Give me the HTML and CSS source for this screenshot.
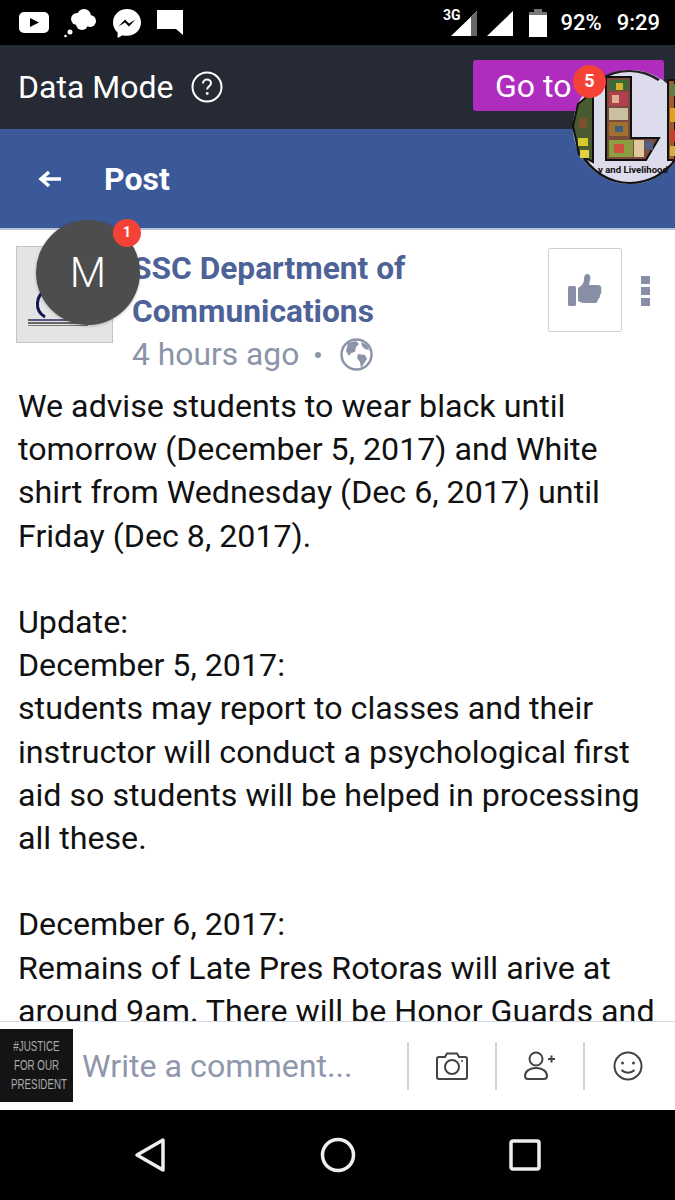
FILE: index.html
```html
<!DOCTYPE html>
<html>
<head>
  <meta charset="UTF-8">
  <title>Post</title>
  <link rel="stylesheet" href="styles.css">
</head>
<body>
  <div class="phone">
    <div class="status">
      <div class="status-left">
        <svg class="s-icon" width="32" height="24" viewBox="0 0 32 24"><rect x="1" y="1" width="30" height="21" rx="5" fill="#fff"/><path d="M12 7l9 4.500-9 4.500z" fill="#000"/></svg>
        <svg class="s-icon" width="34" height="32" viewBox="0 0 34 32"><circle cx="13" cy="12" r="6" fill="#fff"/><circle cx="20" cy="9" r="7" fill="#fff"/><circle cx="26" cy="14" r="6" fill="#fff"/><circle cx="18" cy="17" r="6" fill="#fff"/><circle cx="6" cy="25" r="2.500" fill="#fff"/><circle cx="1.500" cy="29" r="1.300" fill="#fff"/></svg>
        <svg class="s-icon" width="30" height="30" viewBox="0 0 30 30"><path d="M15 1C7 1 1 7 1 14.500c0 4 1.800 7.500 4.600 10V30l5-2.800c1.400.4 2.900.6 4.400.6 8 0 14-6 14-13.300S23 1 15 1z" fill="#fff"/><path d="M6.500 18.500L13 11.500l4 4 6.500-4-6.500 7-4-4z" fill="#000"/></svg>
        <svg class="s-icon" width="28" height="27" viewBox="0 0 28 27"><path d="M1 1h26v25l-7-6H1z" fill="#fff"/></svg>
      </div>
      <div class="status-right">
        <svg class="sig-3g" width="27" height="26" viewBox="0 0 27 26"><path d="M1 26L27 1v25z" fill="#fff"/><path d="M21 7l6-6v25h-6z" fill="#666"/><text x="-7" y="10" class="g3">3G</text></svg>
        <svg class="sig" width="28" height="26" viewBox="0 0 28 26"><path d="M1 26L27 1v25z" fill="#fff"/></svg>
        <svg class="batt" width="18" height="28" viewBox="0 0 18 28"><rect x="5" y="0" width="8" height="3" fill="#777"/><rect x="0" y="3" width="18" height="3" fill="#777"/><rect x="0" y="6" width="18" height="22" fill="#fff"/></svg>
        <span class="pct">92%</span>
        <span class="time">9:29</span>
      </div>
    </div>

    <div class="databar">
      <div class="data-left">
        <span class="data-label">Data Mode</span>
        <svg width="32" height="32" viewBox="0 0 32 32"><circle cx="16" cy="16" r="14.500" fill="none" stroke="#fff" stroke-width="2"/><path d="M12 12.500c0-2.400 1.800-4 4-4s4 1.600 4 3.700c0 3-3.800 3.200-3.800 6.300" fill="none" stroke="#fff" stroke-width="2"/><circle cx="16.200" cy="22.500" r="1.400" fill="#fff"/></svg>
      </div>
      <div class="goto">Go to</div>
    </div>

    <div class="titlebar">
      <svg width="24" height="18" viewBox="0 0 24 18"><path d="M23 9H5M11 2L3 9l8 7" fill="none" stroke="#fff" stroke-width="3.500"/></svg>
      <span class="title">Post</span>
    </div>

    <div class="content">
      <div class="post-head">
        <div class="page-pic">
          <svg width="97" height="97" viewBox="0 0 97 97"><path d="M29 71a15 15 0 0 1 2-27" fill="none" stroke="#14145a" stroke-width="3"/><rect x="12" y="73" width="60" height="2" fill="#555a80"/><rect x="12" y="76" width="60" height="2" fill="#666"/><rect x="12" y="79" width="60" height="1" fill="#777"/></svg>
        </div>
        <div class="head-text">
          <div class="page-name">SSC Department of<br>Communications</div>
          <div class="meta">
            <span>4 hours ago</span>
            <span class="dot"></span>
            <svg width="33" height="33" viewBox="0 0 33 33"><circle cx="16.500" cy="16.500" r="15" fill="#fff" stroke="#8b94a8" stroke-width="2.500"/><path d="M8 5l8-2 3 3-3 3-1 5-4 1-2 3-3-5zM18 16l7 1 2 4-4 6-2 3-1-6-3-4zM21 4l6 3 2 5-4-1-3-3z" fill="#8b94a8"/></svg>
          </div>
        </div>
        <div class="like-btn">
          <svg width="34" height="32" viewBox="0 0 34 32"><rect x="0" y="12" width="8" height="20" rx="1.500" fill="#868fa6"/><path d="M10 14c4-2 6-5 6-9 0-3 1-5 3-5 3 0 4 3 3 6l-1 5h9c3 0 4 3 3 5 1 2 0 4-1 5 0 2-1 4-2 4 0 2-1 4-3 4H17c-3 0-5-1-7-2z" fill="#868fa6"/></svg>
        </div>
        <div class="more"><i></i><i></i><i></i></div>
      </div>
      <div class="post-body">
        <p>We advise students to wear black until<br>tomorrow (December 5, 2017) and White<br>shirt from Wednesday (Dec 6, 2017) until<br>Friday (Dec 8, 2017).</p>
        <p>Update:<br>December 5, 2017:<br>students may report to classes and their<br>instructor will conduct a psychological first<br>aid so students will be helped in processing<br>all these.</p>
        <p>December 6, 2017:<br>Remains of Late Pres Rotoras will arive at<br>around 9am. There will be Honor Guards and</p>
      </div>
    </div>

    <div class="commentbar">
      <div class="justice"><span>#JUSTICE<br>FOR OUR<br>PRESIDENT</span></div>
      <div class="write">Write a comment...</div>
      <div class="c-action">
        <svg width="32" height="28" viewBox="0 0 32 28"><path d="M3 5h6l2-3.500h10L23 5h6c1 0 2 1 2 2v18c0 1-1 2-2 2H3c-1 0-2-1-2-2V7c0-1 1-2 2-2z" fill="none" stroke="#444" stroke-width="2"/><circle cx="16" cy="15" r="7" fill="none" stroke="#444" stroke-width="2"/><circle cx="26" cy="9" r="1" fill="#444"/></svg>
      </div>
      <div class="c-action">
        <svg width="32" height="30" viewBox="0 0 32 30"><circle cx="12" cy="8" r="6.500" fill="none" stroke="#444" stroke-width="2"/><path d="M1 25c0-5 5-8 11-8s11 3 11 8c0 2-1 3-3 3H4c-2 0-3-1-3-3z" fill="none" stroke="#444" stroke-width="2"/><path d="M24 8h7M27.500 4.500v7" stroke="#444" stroke-width="2"/></svg>
      </div>
      <div class="c-action">
        <svg width="30" height="30" viewBox="0 0 30 30"><circle cx="15" cy="15" r="13.500" fill="none" stroke="#444" stroke-width="2"/><circle cx="9.500" cy="12" r="1.500" fill="#444"/><circle cx="20.500" cy="12" r="1.500" fill="#444"/><path d="M8.500 19c3.500 3.500 9.500 3.500 13 0" fill="none" stroke="#444" stroke-width="2"/></svg>
      </div>
    </div>

    <div class="navbar">
      <svg width="32" height="36" viewBox="0 0 32 36"><path d="M29 3v30L3 18z" fill="none" stroke="#eee" stroke-width="3.500" stroke-linejoin="round"/></svg>
      <svg width="36" height="36" viewBox="0 0 36 36"><circle cx="18" cy="18" r="15.500" fill="none" stroke="#eee" stroke-width="3.500"/></svg>
      <svg width="32" height="32" viewBox="0 0 32 32"><rect x="2" y="2" width="28" height="28" rx="2" fill="none" stroke="#eee" stroke-width="3.500"/></svg>
    </div>

    <!-- chat heads float over everything -->
    <div class="head-m">M<span class="badge badge-m">1</span></div>
    <div class="head-tl">
      <svg width="103" height="118" viewBox="0 0 103 118">
        <circle cx="58" cy="59" r="57" fill="#dcdcec"/>
        <path d="M58 116a57 57 0 0 0 45-22v-4a55 55 0 0 1-45 24 55 55 0 0 1-48-30l-2 2a57 57 0 0 0 50 30z" fill="#111"/>
        <path d="M58 2a57 57 0 0 1 30 9l-2 2a55 55 0 0 0-28-9 55 55 0 0 0-30 9l-2-2a57 57 0 0 1 32-9z" fill="#222"/>
        <path d="M1 58l5-22 12-10 3 0 0 68-14-8z" fill="#4a5a30" stroke="#111" stroke-width="2"/>
        <rect x="7" y="50" width="8" height="10" fill="#7a5030"/><rect x="6" y="70" width="10" height="8" fill="#d8c830"/><rect x="8" y="82" width="9" height="8" fill="#e0d040"/>
        <path d="M34 9h25v61l28 0-13 22H34z" fill="#7a4a3a" stroke="#111" stroke-width="2"/>
        <rect x="37" y="12" width="19" height="10" fill="#3a6a3a"/><rect x="44" y="15" width="7" height="7" fill="#d8b030"/>
        <rect x="37" y="24" width="19" height="14" fill="#b04050"/><rect x="40" y="27" width="7" height="8" fill="#e0b090"/>
        <rect x="37" y="40" width="19" height="12" fill="#c8c0a0"/><rect x="37" y="54" width="19" height="14" fill="#a07030"/><rect x="43" y="58" width="8" height="6" fill="#406080"/>
        <rect x="37" y="72" width="24" height="17" fill="#8aa040"/><rect x="62" y="72" width="10" height="17" fill="#e0c8a0"/><rect x="42" y="76" width="10" height="9" fill="#d05040"/><rect x="73" y="73" width="8" height="9" fill="#506080"/>
        <path d="M96 12h7v80h-7z" fill="#a05a30" stroke="#111" stroke-width="2"/>
        <rect x="98" y="16" width="5" height="12" fill="#5a8040"/><rect x="98" y="40" width="5" height="14" fill="#e0a020"/><rect x="98" y="62" width="5" height="12" fill="#c04030"/><rect x="98" y="78" width="5" height="10" fill="#d0b040"/>
      </svg>
      <span class="tl-caption">y and Livelihood</span>
    </div>
    <span class="badge badge-five">5</span>
  </div>
</body>
</html>
```

FILE: styles.css
```css
body {
  margin: 0;
  font-family: "Roboto", sans-serif;
  background-color: #fff;
}
.phone {
  width: 675px;
  height: 1200px;
  position: relative;
  overflow: hidden;
  display: flex;
  flex-direction: column;
}

/* status bar */
.status {
  height: 45px;
  background-color: #000;
  display: flex;
  justify-content: space-between;
  align-items: center;
  padding: 0 15px 0 18px;
  flex-shrink: 0;
}
.status-left {
  display: flex;
  align-items: center;
  gap: 14px;
}
.status-right {
  display: flex;
  align-items: center;
  color: #fff;
  font-size: 22px;
  font-weight: 500;
}
.g3 {
  font-size: 14px;
  font-weight: 700;
  fill: #fff;
}
.sig-3g { margin-right: 9px; overflow: visible; }
.sig { margin-right: 15px; }
.batt { margin-right: 13px; }
.pct { margin-right: 15px; }

/* data mode bar */
.databar {
  height: 84px;
  background-color: #252a34;
  display: flex;
  justify-content: space-between;
  align-items: center;
  padding: 0 11px 0 18px;
  flex-shrink: 0;
}
.data-left {
  display: flex;
  align-items: center;
  gap: 18px;
}
.data-label {
  color: #fff;
  font-size: 32px;
}
.goto {
  width: 191px;
  height: 51px;
  margin-bottom: 3px;
  box-sizing: border-box;
  background-color: #b02cbe;
  border-radius: 3px;
  color: #fff;
  font-size: 32px;
  line-height: 53px;
  padding-left: 22px;
}

/* title bar */
.titlebar {
  height: 99px;
  background-color: #3b5998;
  border-bottom: 2px solid #b6c2dc;
  display: flex;
  align-items: center;
  gap: 42px;
  padding-left: 38px;
  flex-shrink: 0;
}
.title {
  color: #fff;
  font-size: 32px;
  font-weight: 700;
}

/* post */
.content {
  flex: 1;
  overflow: hidden;
  min-height: 0;
}
.post-head {
  display: flex;
  padding: 16px 25px 0 16px;
  height: 155px;
  box-sizing: border-box;
}
.page-pic {
  width: 97px;
  height: 97px;
  background-color: #e4e4e4;
  box-shadow: inset 0 0 0 1px #c4c4c4;
  flex-shrink: 0;
}
.head-text {
  margin-left: 19px;
  flex: 1;
  margin-top: 0;
}
.page-name {
  color: #4d6297;
  font-size: 31.7px;
  font-weight: 700;
  line-height: 43px;
  margin-top: 1px;
}
.meta {
  display: flex;
  align-items: center;
  color: #8b94a8;
  font-size: 31.8px;
  line-height: 43px;
}
.dot {
  width: 6px;
  height: 6px;
  border-radius: 50%;
  background-color: #8b94a8;
  margin: 0 19px 0 16px;
}
.like-btn {
  width: 74px;
  height: 84px;
  box-sizing: border-box;
  border: 1px solid #cfcfcf;
  border-radius: 2px;
  display: flex;
  align-items: center;
  justify-content: center;
  margin-top: 2px;
}
.more {
  display: flex;
  flex-direction: column;
  gap: 3px;
  margin: 30px 0 0 19px;
}
.more i {
  display: block;
  width: 9px;
  height: 8px;
  background-color: #868fa6;
}
.post-body {
  padding: 0 18px;
  font-size: 32.2px;
  line-height: 43.2px;
  color: #111;
  white-space: nowrap;
}
.post-body p {
  margin: 0 0 43.2px;
}

/* comment bar */
.commentbar {
  height: 89px;
  border-top: 1px solid #d5d8e6;
  box-sizing: border-box;
  background-color: #fff;
  display: flex;
  align-items: center;
  padding-right: 4px;
  flex-shrink: 0;
}
.justice {
  width: 73px;
  height: 73px;
  margin-top: -1px;
  background-color: #141414;
  color: #aaa;
  font-family: "Liberation Sans", sans-serif;
  font-size: 14px;
  line-height: 19px;
  text-align: center;
  padding-top: 8px;
  box-sizing: border-box;
  flex-shrink: 0;
}
.justice span {
  display: block;
  transform: scaleX(0.7);
}
.write {
  flex: 1;
  margin-left: 9px;
  color: #8f97ad;
  font-size: 32.2px;
}
.c-action {
  width: 88px;
  height: 48px;
  border-left: 2px solid #d2d2d2;
  display: flex;
  align-items: center;
  justify-content: center;
  box-sizing: border-box;
}

/* android nav */
.navbar {
  height: 90px;
  background-color: #000;
  flex-shrink: 0;
  display: flex;
  align-items: center;
  justify-content: space-between;
  padding: 0 134px 0 134px;
}

/* chat heads */
.head-m {
  position: absolute;
  left: 36px;
  top: 220px;
  width: 104px;
  height: 105px;
  border-radius: 50%;
  background-color: #4d4d4d;
  box-shadow: 0 1px 3px rgba(0, 0, 0, 0.25);
  color: #fff;
  font-size: 42px;
  font-weight: 300;
  line-height: 105px;
  text-align: center;
}
.badge {
  position: absolute;
  border-radius: 50%;
  background-color: #f44336;
  color: #fff;
  font-weight: 700;
  text-align: center;
}
.badge-m {
  left: 77px;
  top: -1px;
  width: 28px;
  height: 28px;
  font-size: 14px;
  line-height: 27px;
}
.badge-five {
  left: 573px;
  top: 65px;
  width: 33px;
  height: 33px;
  font-size: 18px;
  line-height: 32px;
}
.head-tl {
  position: absolute;
  left: 572px;
  top: 68px;
  width: 103px;
  height: 118px;
}
.tl-caption {
  position: absolute;
  left: 26px;
  top: 96px;
  white-space: nowrap;
  font-size: 9.600px;
  font-weight: 700;
  color: #111;
}
```
